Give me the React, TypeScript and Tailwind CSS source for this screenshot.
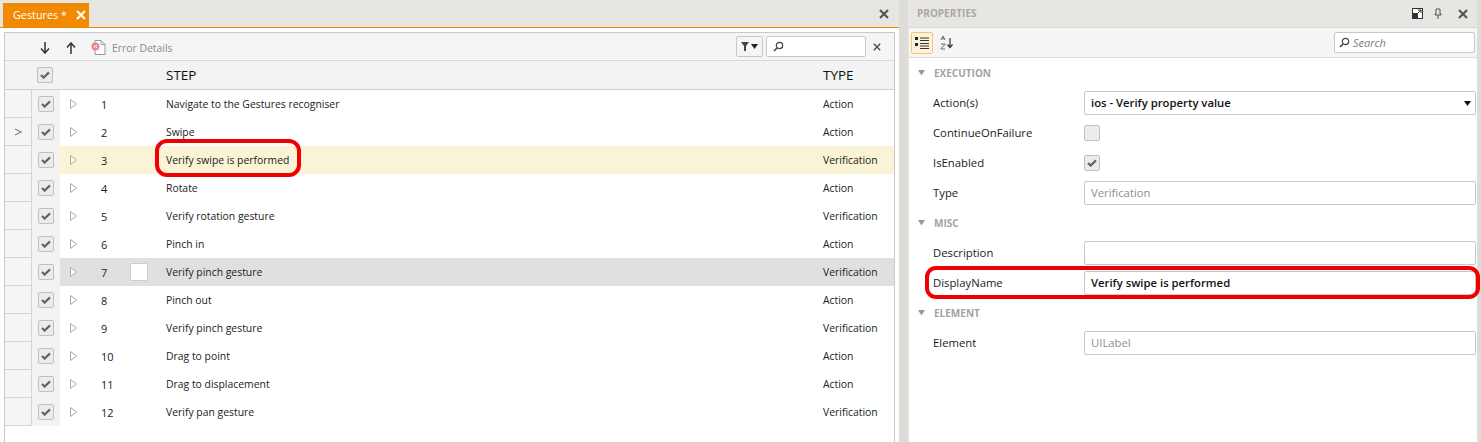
import React from "react";

const steps: [string, string][] = [
  ["Navigate to the Gestures recogniser", "Action"],
  ["Swipe", "Action"],
  ["Verify swipe is performed", "Verification"],
  ["Rotate", "Action"],
  ["Verify rotation gesture", "Verification"],
  ["Pinch in", "Action"],
  ["Verify pinch gesture", "Verification"],
  ["Pinch out", "Action"],
  ["Verify pinch gesture", "Verification"],
  ["Drag to point", "Action"],
  ["Drag to displacement", "Action"],
  ["Verify pan gesture", "Verification"],
];

function Check({ on = true }: { on?: boolean }) {
  return (
    <div className="w-4 h-4 rounded-[2px] border border-[#c0c0c0] bg-[#ececec] flex items-center justify-center">
      {on && (
        <svg width="10" height="8" viewBox="0 0 10 8">
          <path d="M1 4l2.600 2.600L9 1.400" fill="none" stroke="#666" strokeWidth="2.200" />
        </svg>
      )}
    </div>
  );
}

function X({ size = 10, color = "#555", width = 2 }: { size?: number; color?: string; width?: number }) {
  return (
    <svg width={size} height={size} viewBox="0 0 10 10">
      <path d="M1 1l8 8M9 1l-8 8" stroke={color} strokeWidth={width} fill="none" />
    </svg>
  );
}

function Search() {
  return (
    <svg width="11" height="11" viewBox="0 0 11 11">
      <circle cx="6.500" cy="4.500" r="3.200" fill="none" stroke="#444" strokeWidth="1.200" />
      <path d="M4 7l-3 3" stroke="#444" strokeWidth="1.600" />
    </svg>
  );
}

function Field({ label, children }: { label: string; children: React.ReactNode }) {
  return (
    <div className="flex items-center h-[30px]">
      <div className="w-[175px] shrink-0 pl-[24px] text-[11.3px] text-[#1a1a1a]">{label}</div>
      <div className="flex-1 min-w-0 flex items-center">{children}</div>
    </div>
  );
}

function Section({ title }: { title: string }) {
  return (
    <div className="flex items-center h-[30px]">
      <svg width="8" height="6" viewBox="0 0 8 6" className="ml-[9px] mr-[8px] shrink-0">
        <path d="M0 0h7L3.500 5.500z" fill="#999" />
      </svg>
      <span className="text-[10px] font-bold text-[#a3a3a3]">{title}</span>
    </div>
  );
}

function Input({ value, className = "" }: { value: string; className?: string }) {
  return (
    <div className={"w-full h-[24px] rounded-[2px] border border-[#c8c8c8] bg-white px-[6px] flex items-center text-[11.3px] " + className}>
      {value}
    </div>
  );
}

export default function App() {
  return (
    <div className="relative w-[1481px] h-[442px] overflow-hidden flex bg-[#dedcd7] font-['Open_Sans','Noto_Sans',sans-serif] text-[10.4px] text-[#222]">
      {/* Left document pane */}
      <div className="w-[899px] shrink-0 flex flex-col bg-[#e8e6e3]">
        <div className="h-[28px] shrink-0 flex items-end justify-between border-b border-[#ee8a00] pl-[3px] pr-[10px]">
          <div className="h-[24px] w-[86px] bg-[#f18a00] flex items-center pl-[10px] gap-[9px] text-white text-[10.8px] whitespace-nowrap">
            <span>Gestures *</span>
            <X size={10} color="#fff" width={2} />
          </div>
          <div className="self-center">
            <X size={10} color="#555" width={2.2} />
          </div>
        </div>
        <div className="flex-1 min-h-0 bg-white pt-[4px] pl-[4px] pr-[4px]">
          <div className="h-full border border-[#c9c9c9] border-b-0 bg-white flex flex-col">
            {/* toolbar */}
            <div className="h-[28px] shrink-0 pt-[2px] bg-[#f5f5f5] border-b border-[#d8d8d8] flex items-center text-[#8c8c8c]">
              <svg width="10" height="12" viewBox="0 0 10 12" className="ml-[35px]">
                <path d="M5 0v10M1 6.500L5 11l4-4.500" stroke="#333" strokeWidth="1.500" fill="none" />
              </svg>
              <svg width="10" height="12" viewBox="0 0 10 12" className="ml-[16px]">
                <path d="M5 12V2M1 5.500L5 1l4 4.500" stroke="#333" strokeWidth="1.500" fill="none" />
              </svg>
              <svg width="15" height="15" viewBox="0 0 15 15" className="ml-[15px]">
                <path d="M4 .5h6l4 4V14.500H4z" fill="#fff" stroke="#999" />
                <path d="M10 .5v4h4" fill="none" stroke="#999" />
                <circle cx="4.500" cy="6.500" r="4" fill="#e58a8a" />
                <path d="M3 5l3 3M6 5l-3 3" stroke="#fff" />
              </svg>
              <span className="ml-[6px] pt-[2px] text-[#8a8a8a]">Error Details</span>
              <div className="ml-auto flex items-center -mt-[2px]">
                <div className="w-[27px] h-[21px] rounded-[2px] border border-[#c8c8c8] flex items-center justify-center gap-[2px]">
                  <svg width="8" height="9" viewBox="0 0 8 9"><path d="M0 0h8L5 4v5H3V4z" fill="#444" /></svg>
                  <svg width="7" height="5" viewBox="0 0 7 5"><path d="M0 0h7L3.500 5z" fill="#222" /></svg>
                </div>
                <div className="ml-[3px] w-[100px] h-[21px] rounded-[2px] border border-[#c8c8c8] bg-white flex items-center pl-[6px]">
                  <Search />
                </div>
                <div className="ml-[7px] mr-[13px]">
                  <X size={8} color="#444" width={1.6} />
                </div>
              </div>
            </div>
            {/* header */}
            <div className="h-[29px] shrink-0 flex items-center bg-[#f3f3f3] border-b border-[#d0d0d0]">
              <div className="w-[161px] shrink-0 pl-[32px]"><Check /></div>
              <div className="flex-1 text-[13.5px] text-[#111]">STEP</div>
              <div className="w-[71px] text-[13.5px] text-[#111]">TYPE</div>
            </div>
            {/* rows */}
            {steps.map(([name, type], i) => (
              <div key={i} className="h-[28px] shrink-0 flex items-stretch">
                <div className="w-[27px] shrink-0 bg-[#f5f5f5] border-b border-r border-[#d5d5d5] flex items-center justify-center">
                  {i === 1 && (
                    <svg width="8" height="8" viewBox="0 0 8 8"><path d="M1 1l6 3-6 3" fill="none" stroke="#888" strokeWidth="1.200" /></svg>
                  )}
                </div>
                <div className="w-[28px] shrink-0 bg-[#f3f3f3] flex items-center justify-center">
                  <Check />
                </div>
                <div className={"flex-1 flex items-center " + (i === 2 ? "bg-[#fbf3d5]" : i === 6 ? "bg-[#e0e0e0]" : "bg-white")}>
                  <svg width="7" height="10" viewBox="0 0 7 10" className="ml-[10px] shrink-0">
                    <path d="M.5.5l6 4.500-6 4.500z" fill="#fff" stroke="#aaa" />
                  </svg>
                  <div className="w-[29px] ml-[24px] shrink-0 pt-[2px] text-[11px]">{i + 1}</div>
                  <div className="w-[18px] mr-[18px] shrink-0">
                    {i === 6 && <div className="w-[18px] h-[18px] rounded-[2px] border border-[#cfcfcf] bg-white" />}
                  </div>
                  <div className="flex-1 pt-[2px]">{name}</div>
                  <div className="w-[71px] shrink-0 pt-[2px]">{type}</div>
                </div>
              </div>
            ))}
          </div>
        </div>
      </div>

      {/* Splitter */}
      <div className="w-[9px] shrink-0 bg-[#dedcd7]" />

      {/* Properties */}
      <div className="w-[569px] shrink-0 flex flex-col bg-white border-l border-[#e8e6e3]">
        <div className="h-[28px] shrink-0 bg-[#e8e6e3] border-b border-[#d6d6d6] flex items-center pl-[8px] pr-[9px]">
          <span className="text-[10px] font-bold text-[#a8a8a8]">PROPERTIES</span>
          <svg width="11" height="11" viewBox="0 0 11 11" className="ml-auto">
            <rect x=".5" y=".5" width="10" height="10" fill="#fff" stroke="#333" />
            <rect x="1" y="5" width="5" height="5" fill="#333" />
            <path d="M5 6l4-4M6 2h3v3" stroke="#333" fill="none" />
          </svg>
          <svg width="8" height="11" viewBox="0 0 8 11" className="ml-[11px]">
            <path d="M2 1h4v5h1v1H1V6h1zM4 7v4" stroke="#555" fill="none" />
          </svg>
          <div className="ml-[16px]"><X size={10} color="#555" width={2.2} /></div>
        </div>
        <div className="h-[30px] shrink-0 bg-[#f5f5f5] border-b border-[#dcdcdc] flex items-center pl-[2px] pr-[2px]">
          <div className="w-[22px] h-[22px] rounded-[2px] border border-[#f5c67a] bg-[#fdf3d8] flex items-center justify-center">
            <svg width="14" height="12" viewBox="0 0 14 12">
              <path d="M0 1.500h3M0 7.500h3" stroke="#222" strokeWidth="3" />
              <path d="M5 1h9M5 3.500h9M5 6.500h9M5 9h9M5 11.500h9" stroke="#333" />
            </svg>
          </div>
          <svg width="15" height="15" viewBox="0 0 15 15" className="ml-[7px]">
            <path d="M1 5L3 1l2 4M1.500 3.800h3M1 9h4v.5L1 13.500v.5h4" fill="none" stroke="#666" />
            <path d="M10 3v9M7.500 9.500L10 12.500l2.500-3" fill="none" stroke="#333" strokeWidth="1.200" />
          </svg>
          <div className="ml-auto w-[141px] h-[21px] rounded-[2px] border border-[#c8c8c8] bg-white flex items-center pl-[4px] gap-[3px] italic text-[11px] text-[#7d7d7d]">
            <Search />
            <span className="pt-[2px]">Search</span>
          </div>
        </div>
        <div className="pr-[1px]">
          <Section title="EXECUTION" />
          <Field label="Action(s)">
            <div className="w-full h-[24px] rounded-[2px] border border-[#c8c8c8] bg-white pl-[6px] pr-[4px] flex items-center justify-between font-semibold text-[11.3px] text-[#111]">
              <span>ios - Verify property value</span>
              <svg width="7" height="5" viewBox="0 0 7 5"><path d="M0 0h7L3.500 5z" fill="#111" /></svg>
            </div>
          </Field>
          <Field label="ContinueOnFailure"><Check on={false} /></Field>
          <Field label="IsEnabled"><Check /></Field>
          <Field label="Type"><Input value="Verification" className="text-[#8e8e8e]" /></Field>
          <Section title="MISC" />
          <Field label="Description"><Input value="" /></Field>
          <Field label="DisplayName"><Input value="Verify swipe is performed" className="font-semibold text-[#111]" /></Field>
          <Section title="ELEMENT" />
          <Field label="Element"><Input value="UILabel" className="text-[#8e8e8e]" /></Field>
        </div>
      </div>

      {/* Right edge */}
      <div className="flex-1 bg-[#dedcd7]" />

      {/* Red annotations */}
      <div className="absolute left-[155px] top-[139px] w-[146px] h-[38px] rounded-[12px] border-[4px] border-[#f00000]" />
      <div className="absolute left-[925px] top-[266px] w-[555px] h-[33px] rounded-[11px] border-[4px] border-[#f00000]" />
    </div>
  );
}
